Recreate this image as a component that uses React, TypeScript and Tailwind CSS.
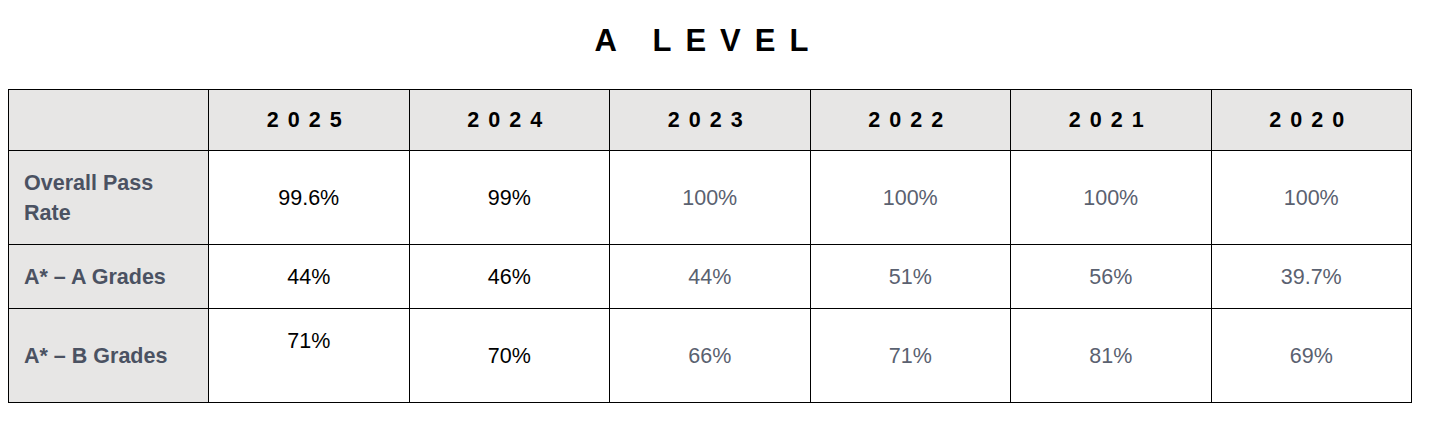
import React from "react";

const years = ["2025", "2024", "2023", "2022", "2021", "2020"];

const rows: { label: string; values: string[]; firstHigh?: boolean }[] = [
  { label: "Overall Pass Rate", values: ["99.6%", "99%", "100%", "100%", "100%", "100%"] },
  { label: "A* – A Grades", values: ["44%", "46%", "44%", "51%", "56%", "39.7%"] },
  { label: "A* – B Grades", values: ["71%", "70%", "66%", "71%", "81%", "69%"], firstHigh: true },
];

export default function App() {
  return (
    <div className="min-h-screen bg-white font-['Liberation_Sans',Arial,sans-serif]">
      <div className="ml-2 w-[1404px] pt-[23px]">
        <h1 className="text-center text-[31px] leading-[36px] font-bold tracking-[14px] text-black mb-[30px] pr-[3px]">
          A LEVEL
        </h1>

        {/* Results table */}
        <table className="w-full table-fixed border-collapse border border-black text-[21.5px] leading-[30px]">
          <colgroup>
            <col className="w-[200px]" />
            {years.map((y) => (
              <col key={y} />
            ))}
          </colgroup>
          <thead>
            <tr className="bg-[#e7e6e5] h-[61px]">
              <th className="border border-black"></th>
              {years.map((y) => (
                <th key={y} className="border border-black text-center font-bold tracking-[9px] text-black py-0">
                  {y}
                </th>
              ))}
            </tr>
          </thead>
          <tbody>
            {rows.map((row) => (
              <tr key={row.label} className={row.label === "A* – A Grades" ? "h-[64px]" : "h-[94px]"}>
                <td className="border border-black bg-[#e7e6e5] pl-[15px] pr-4 py-4 text-left font-bold text-[#4b5262] align-middle">
                  {row.label === "Overall Pass Rate" ? (
                    <>
                      Overall Pass
                      <br />
                      Rate
                    </>
                  ) : (
                    row.label
                  )}
                </td>
                {row.values.map((v, i) => (
                  <td
                    key={i}
                    className={`border border-black text-center align-middle py-4 ${
                      i < 2 ? "text-black" : "text-[#5a6170]"
                    }`}
                  >
                    {row.firstHigh && i === 0 ? (
                      <>
                        {v}
                        <br />
                        &nbsp;
                      </>
                    ) : (
                      v
                    )}
                  </td>
                ))}
              </tr>
            ))}
          </tbody>
        </table>
      </div>
    </div>
  );
}
